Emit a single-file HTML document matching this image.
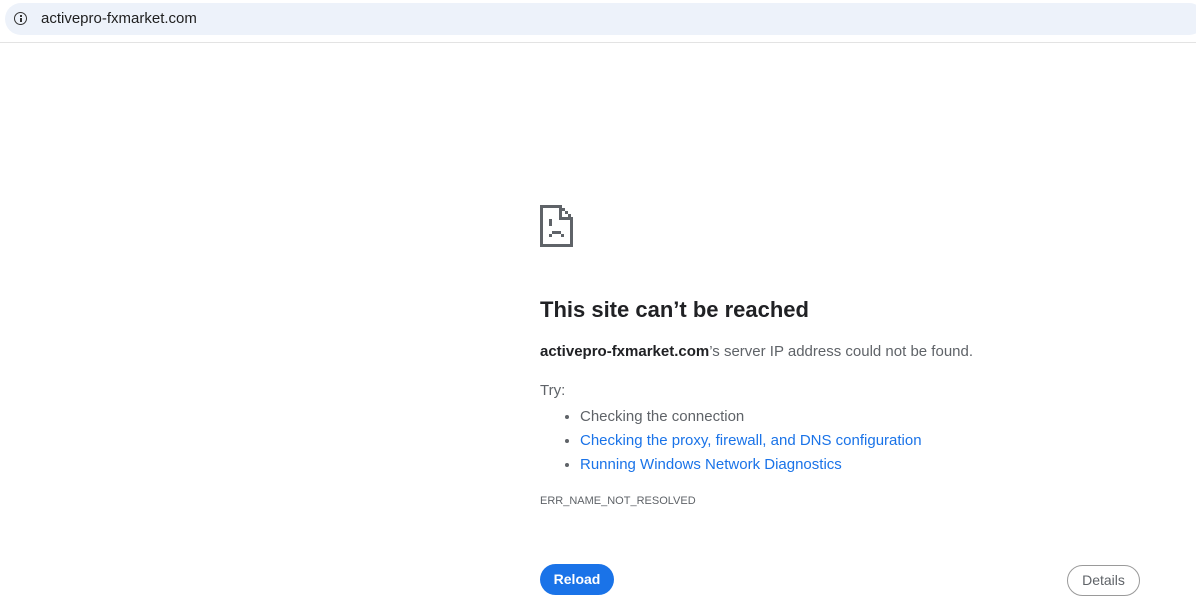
<!DOCTYPE html>
<html><head><meta charset="utf-8"><style>
body{margin:0;width:1196px;height:613px;background:#fff;font-family:"Liberation Sans",sans-serif;position:relative;overflow:hidden}
.bar{position:absolute;left:5px;top:3px;width:1200px;height:32px;background:#edf2fa;border-radius:16px}
.line{position:absolute;left:0;top:42px;width:1196px;height:1px;background:#e3e3e3}
.url{position:absolute;left:41px;top:10px;font-size:15px;color:#1f1f1f}
.info{position:absolute;left:14px;top:12px;width:11px;height:11px;border:1.5px solid #333;border-radius:50%}
.info:before{content:"";position:absolute;left:4.5px;top:4.5px;width:2px;height:4px;background:#333}
.info:after{content:"";position:absolute;left:4.5px;top:1.5px;width:2px;height:2px;background:#333}
h1{position:absolute;left:540px;top:297px;margin:0;font-size:22px;font-weight:bold;color:#202124}
.t{position:absolute;left:540px;font-size:15px;color:#5f6368}
ul{position:absolute;left:540px;top:405px;margin:0;padding-left:40px;font-size:15px;color:#5f6368;line-height:24px}
a{color:#1a73e8;text-decoration:none}
.err{position:absolute;left:540px;top:495px;font-size:11px;color:#5f6368}
.reload{position:absolute;left:540px;top:564px;width:74px;height:31px;background:#1a73e8;border-radius:16px;color:#fff;font-size:14px;font-weight:600;text-align:center;line-height:31px}
.det{position:absolute;left:1067px;top:565px;width:71px;height:29px;border:1px solid #9a9a9a;border-radius:16px;color:#5f6368;font-size:14px;text-align:center;line-height:29px}
</style></head><body>
<div class="bar"></div><div class="info"></div>
<div class="url">activepro-fxmarket.com</div>
<div class="line"></div>
<svg style="position:absolute;left:540px;top:205px" width="34" height="42" viewBox="0 0 34 42" shape-rendering="crispEdges">
<g fill="#5f6368">
<rect x="0" y="0" width="22" height="3"/>
<rect x="0" y="0" width="3" height="42"/>
<rect x="0" y="39" width="33" height="3"/>
<rect x="30" y="12" width="3" height="30"/>
<rect x="19" y="0" width="3" height="15"/>
<rect x="19" y="12" width="14" height="3"/>
<rect x="22" y="3" width="3" height="3"/>
<rect x="25" y="6" width="3" height="3"/>
<rect x="28" y="9" width="3" height="3"/>
<rect x="9" y="14" width="3" height="7"/>
<rect x="9" y="29" width="3" height="3"/>
<rect x="12" y="26" width="9" height="3"/>
<rect x="21" y="29" width="3" height="3"/>
</g>
</svg>
<h1>This site can’t be reached</h1>
<div class="t" style="top:343px"><b style="color:#202124">activepro-fxmarket.com</b>’s server IP address could not be found.</div>
<div class="t" style="top:382px">Try:</div>
<ul><li>Checking the connection</li><li><a>Checking the proxy, firewall, and DNS configuration</a></li><li><a>Running Windows Network Diagnostics</a></li></ul>
<div class="err">ERR_NAME_NOT_RESOLVED</div>
<div class="reload">Reload</div>
<div class="det">Details</div>
</body></html>
